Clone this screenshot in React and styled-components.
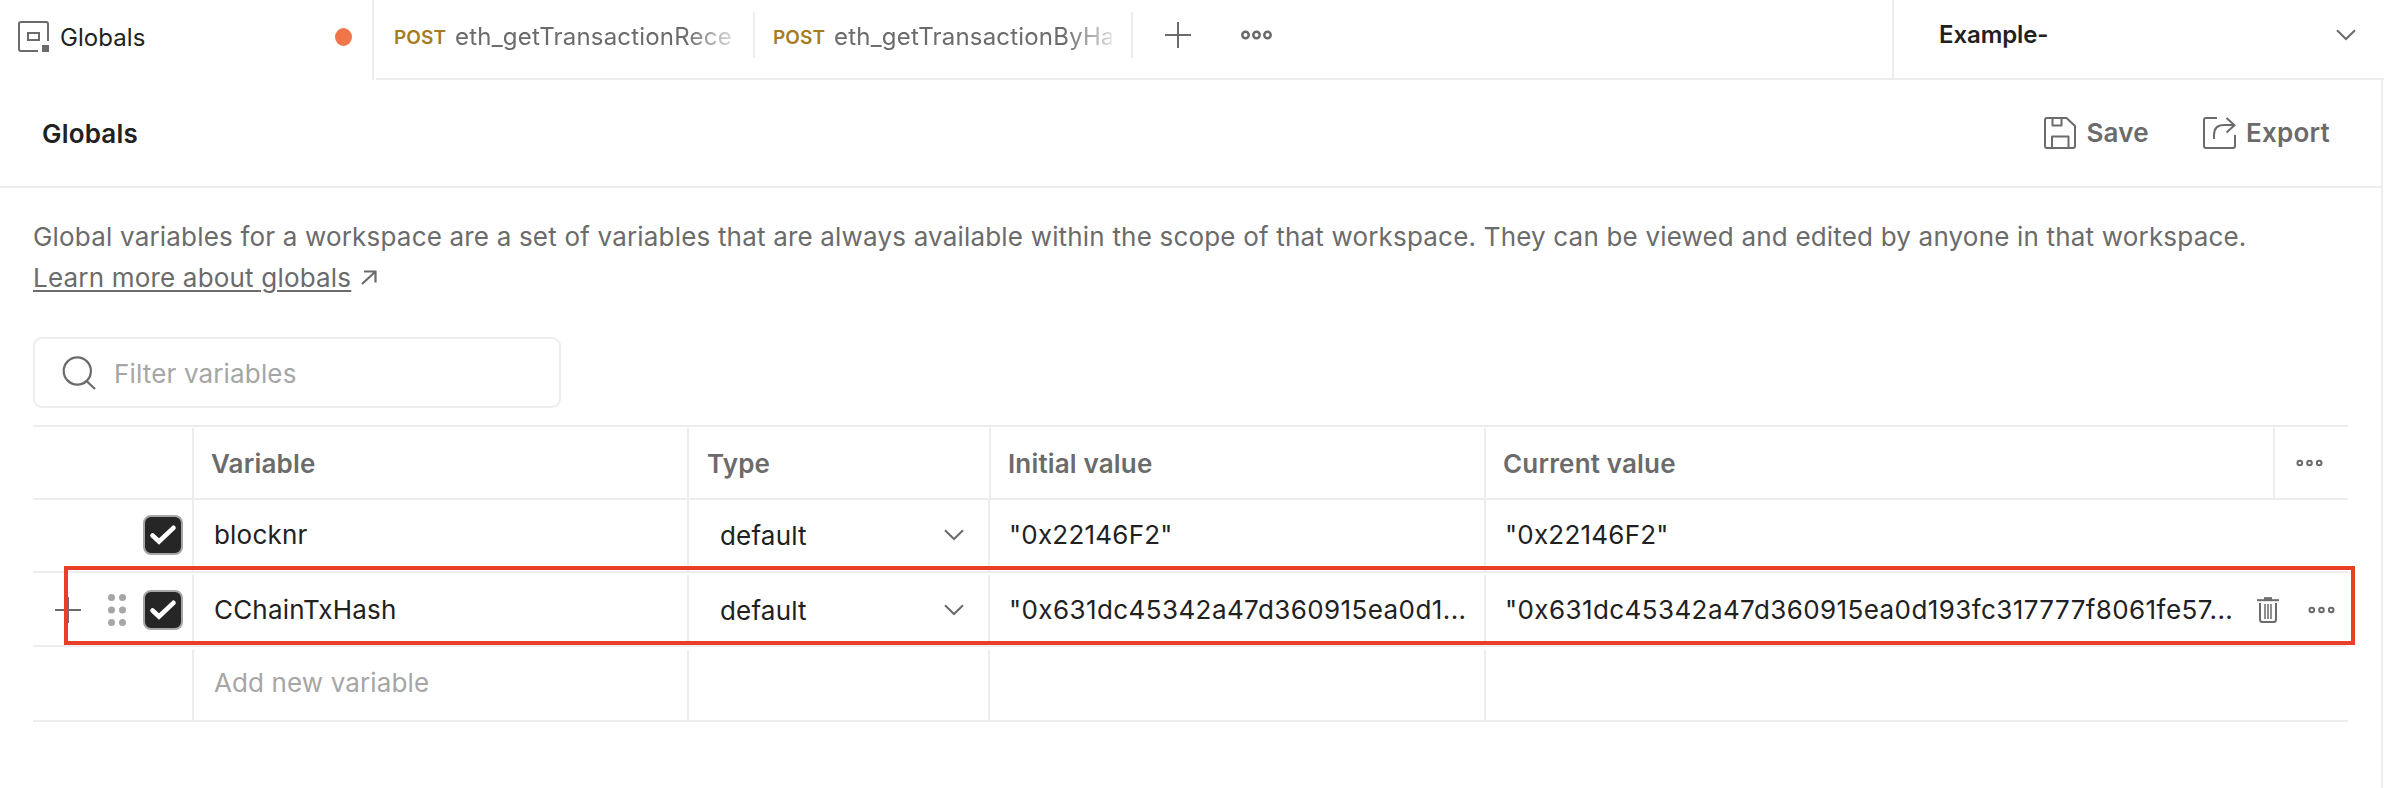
import React from "react";
import styled, { createGlobalStyle, css } from "styled-components";

const LINE = "#ededed";
const GREY = "#6b6b6b";
const MUTED = "#a6a6a6";
const INK = "#212121";

const GlobalStyle = createGlobalStyle`
  * { box-sizing: border-box; }
  body {
    margin: 0;
    background: #fff;
    color: ${INK};
    font-family: Inter, "Liberation Sans", sans-serif;
    font-size: 26px;
    letter-spacing: 0.19px;
    overflow: hidden;
  }
  svg { display: block; flex: none; }
`;

const Page = styled.div`
  width: 2384px;
  height: 788px;
  display: flex;
  flex-direction: column;
`;

/* Tab bar */
const TabBar = styled.div`
  display: flex;
  height: 80px;
  flex: none;
`;
const ActiveTab = styled.div`
  display: flex;
  align-items: center;
  width: 374px;
  padding: 0 20px 6px 18px;
  border-right: 2px solid ${LINE};
  font-size: 24px;
  letter-spacing: 0.06px;
`;
const TabLabel = styled.span`
  flex: 1;
  margin-left: 10px;
`;
const UnsavedDot = styled.span`
  width: 17px;
  height: 18px;
  border-radius: 50%;
  background: #f0764a;
`;
const TabStrip = styled.div`
  display: flex;
  flex: 1;
  margin-left: 2px;
  border-bottom: 2px solid ${LINE};
`;
const RequestTab = styled.div`
  display: flex;
  align-items: center;
  width: ${(p) => p.$width}px;
  height: 46px;
  margin-top: 12px;
  padding: 4px 0 0 18px;
  border-right: 2px solid ${LINE};
`;
const Method = styled.span`
  width: 61px;
  flex: none;
  color: #a67c1f;
  font-size: 19px;
  font-weight: 600;
  letter-spacing: 0.1px;
`;
const RequestName = styled.span`
  width: 292px;
  overflow: hidden;
  white-space: nowrap;
  color: ${GREY};
  font-size: 24px;
  line-height: 34px;
  letter-spacing: 0.2px;
  mask-image: linear-gradient(to right, #000 230px, rgba(0, 0, 0, 0.25) 277px, transparent 278px);
`;
const StripActions = styled.div`
  display: flex;
  align-items: center;
  gap: 49px;
  padding: 0 0 9px 31px;
  color: ${GREY};
`;
const EnvironmentPicker = styled.div`
  display: flex;
  align-items: center;
  justify-content: space-between;
  width: 492px;
  margin-left: auto;
  padding: 0 28px 9px 45px;
  border-left: 2px solid ${LINE};
  font-size: 24px;
  font-weight: 600;
  letter-spacing: -0.1px;
`;

/* Panel */
const Panel = styled.main`
  flex: 1;
  width: 2383px;
  border-right: 2px solid ${LINE};
`;
const Header = styled.header`
  display: flex;
  align-items: center;
  height: 108px;
  padding: 0 51px 0 42px;
  border-bottom: 2px solid ${LINE};
`;
const Title = styled.h1`
  flex: 1;
  margin: 2px 0 0;
  font-size: 26px;
  font-weight: 600;
  line-height: 32px;
`;
const ActionButton = styled.button`
  display: flex;
  align-items: center;
  gap: 10px;
  margin: 0 0 0 54px;
  padding: 0;
  border: 0;
  background: none;
  color: ${GREY};
  font: 600 26px/32px Inter, "Liberation Sans", sans-serif;
  letter-spacing: 0.25px;
`;
const Body = styled.div`
  padding: 29px 33px 0;
`;
const Description = styled.p`
  margin: 0;
  color: ${GREY};
  line-height: 40px;
  letter-spacing: 0.185px;
  white-space: nowrap;
`;
const LearnMore = styled.div`
  display: flex;
  align-items: center;
  gap: 10px;
  height: 40px;
  color: ${GREY};
  span {
    text-decoration: underline;
    text-decoration-thickness: 2px;
    text-underline-offset: 3px;
  }
`;
const FilterBox = styled.div`
  display: flex;
  align-items: center;
  gap: 18px;
  width: 528px;
  height: 71px;
  margin: 40px 0 17px;
  padding-left: 27px;
  border: 2px solid ${LINE};
  border-radius: 9px;
  color: ${MUTED};
  letter-spacing: 0.15px;
  span { padding-top: 1px; }
`;

/* Variables table */
const Table = styled.div`
  width: 2315px;
  border-top: 2px solid ${LINE};
`;
const Row = styled.div`
  display: grid;
  grid-template-columns: ${(p) =>
    p.$head ? "159px 495px 302px 495px 789px 1fr" : "159px 495px 301px 496px 1fr"};
  position: relative;
  height: ${(p) => p.$height}px;
  border-bottom: 2px solid ${LINE};
`;
const Cell = styled.div`
  display: flex;
  align-items: center;
  min-width: 0;
  margin-top: ${(p) => p.$gap || 0}px;
  padding: 0 0 2px ${(p) => p.$indent || 20}px;
  border-left: 2px solid ${LINE};
  white-space: nowrap;
  ${(p) =>
    p.$head &&
    css`
      padding-bottom: 0;
      color: ${GREY};
      font-weight: 600;
      letter-spacing: 0.17px;
    `}
  ${(p) =>
    p.$placeholder &&
    css`
      color: ${MUTED};
      padding-bottom: 6px;
      letter-spacing: 0.12px;
    `}
`;
const Lead = styled.div`
  display: flex;
  align-items: center;
  justify-content: flex-end;
  margin-top: ${(p) => p.$gap || 0}px;
  padding: 0 9px 1px 0;
`;
const Checkbox = styled.span`
  display: flex;
  align-items: center;
  justify-content: center;
  width: 40px;
  height: 40px;
  border: 2px solid ${MUTED};
  border-radius: 8px;
  background: #262626;
`;
const InsertButton = styled.span`
  margin-right: 26px;
  color: ${GREY};
`;
const Grip = styled.span`
  margin-right: 17px;
`;
const TypeText = styled.span`
  flex: 1;
  padding-top: 2px;
`;
const ChevronSlot = styled.span`
  margin: 1px 24px 0 0;
`;
const Value = styled.span`
  margin-left: -1px;
  letter-spacing: ${(p) => (p.$wide ? 0.41 : 0.22)}px;
`;
const RowActions = styled.span`
  display: flex;
  align-items: center;
  gap: 29px;
  margin-left: auto;
  padding: 1px 13px 0 0;
`;
const Highlight = styled.div`
  position: absolute;
  left: 31px;
  top: -7px;
  width: 2291px;
  height: 79px;
  border: 4px solid #e93f26;
`;

const Plus = () => (
  <svg width="28" height="28" viewBox="0 0 28 28" fill="none" stroke="currentColor" strokeWidth="2">
    <path d="M1 14H27M14 1V27" />
  </svg>
);
const Dots = ({ step = 9.7, r = 2.3, size = 27, sw = 2 }) => (
  <svg width={size} height="12" viewBox={`0 0 ${size} 12`} fill="none" stroke={GREY} strokeWidth={sw}>
    <circle cx={size / 2 - step} cy="6" r={r} />
    <circle cx={size / 2} cy="6" r={r} />
    <circle cx={size / 2 + step} cy="6" r={r} />
  </svg>
);
const Chevron = () => (
  <svg width="20" height="12" viewBox="0 0 20 12" fill="none" stroke={GREY} strokeWidth="2">
    <path d="M1 1.2L10 10L19 1.2" />
  </svg>
);
const GlobalsIcon = () => (
  <svg width="32" height="32" viewBox="0 0 32 32" fill="none" stroke={GREY} strokeWidth="2">
    <path d="M20 30H3Q1 30 1 28V3Q1 1 3 1H28Q30 1 30 3V20" />
    <rect x="10" y="12" width="11" height="7" />
    <rect x="24" y="24" width="7" height="7" fill={GREY} stroke="none" />
  </svg>
);
const SaveIcon = () => (
  <svg width="32" height="32" viewBox="0 0 32 32" fill="none" stroke="currentColor" strokeWidth="2" strokeLinejoin="round">
    <path d="M3 1H22.5L31 9V29Q31 31 29 31H3Q1 31 1 29V3Q1 1 3 1Z" />
    <path d="M8.5 1V8.5H17.5V1M8 31V19.5H24.5V31" />
  </svg>
);
const ExportIcon = () => (
  <svg width="33" height="32" viewBox="0 0 33 32" fill="none" stroke="currentColor" strokeWidth="2">
    <path d="M14 1H3Q1 1 1 3V29Q1 31 3 31H30Q32 31 32 29V18" />
    <path d="M11 22V18Q11 8 21 8H31M23.5 1L31.5 8.3L23.5 15.5" />
  </svg>
);
const ExternalArrow = () => (
  <svg width="16" height="15" viewBox="0 0 16 15" fill="none" stroke="currentColor" strokeWidth="2.2">
    <path d="M1 14L14 2M3 1.5H14.5V12.5" />
  </svg>
);
const SearchIcon = () => (
  <svg width="34" height="34" viewBox="0 0 34 34" fill="none" stroke={GREY} strokeWidth="2.2">
    <circle cx="15.3" cy="15" r="13.6" />
    <path d="M24.5 25L33 33" />
  </svg>
);
const Check = () => (
  <svg width="28" height="22" viewBox="0 0 28 22" fill="none" stroke="#fff" strokeWidth="4.6" strokeLinecap="round">
    <path d="M3.5 11.5L10 17.5L24.5 3.8" />
  </svg>
);
const GripIcon = () => (
  <svg width="18" height="32" viewBox="0 0 18 32" fill={MUTED}>
    {[3.5, 16, 28.5].map((y) => (
      <React.Fragment key={y}>
        <circle cx="3.5" cy={y} r="3.5" />
        <circle cx="14.5" cy={y} r="3.5" />
      </React.Fragment>
    ))}
  </svg>
);
const Trash = () => (
  <svg width="22" height="26" viewBox="0 0 22 26" fill="none" stroke={GREY}>
    <path d="M0 3.2H22" strokeWidth="2" />
    <path d="M7 1.5H15" strokeWidth="2.6" />
    <path d="M3 6V22.5Q3 25 5.5 25H16.5Q19 25 19 22.5V6" strokeWidth="2" />
    <path d="M8 7V22M11 7V22M14 7V22" strokeWidth="1.5" />
  </svg>
);

function TypeCell({ gap }) {
  return (
    <Cell $gap={gap} $indent={31}>
      <TypeText>default</TypeText>
      <ChevronSlot>
        <Chevron />
      </ChevronSlot>
    </Cell>
  );
}

export default function App() {
  return (
    <Page>
      <GlobalStyle />
      <TabBar>
        <ActiveTab>
          <GlobalsIcon />
          <TabLabel>Globals</TabLabel>
          <UnsavedDot />
        </ActiveTab>
        <TabStrip>
          <RequestTab $width={379}>
            <Method>POST</Method>
            <RequestName>eth_getTransactionRece</RequestName>
          </RequestTab>
          <RequestTab $width={378}>
            <Method>POST</Method>
            <RequestName>eth_getTransactionByHa</RequestName>
          </RequestTab>
          <StripActions>
            <Plus />
            <Dots step={11} r={3.2} size={31} sw={2.5} />
          </StripActions>
          <EnvironmentPicker>
            <span>Example-</span>
            <Chevron />
          </EnvironmentPicker>
        </TabStrip>
      </TabBar>
      <Panel>
        <Header>
          <Title>Globals</Title>
          <ActionButton>
            <SaveIcon />
            Save
          </ActionButton>
          <ActionButton>
            <ExportIcon />
            Export
          </ActionButton>
        </Header>
        <Body>
          <Description>
            Global variables for a workspace are a set of variables that are always available within the scope of that
            workspace. They can be viewed and edited by anyone in that workspace.
          </Description>
          <LearnMore>
            <span>Learn more about globals</span>
            <ExternalArrow />
          </LearnMore>
          <FilterBox>
            <SearchIcon />
            <span>Filter variables</span>
          </FilterBox>
          <Table>
            <Row $head $height={73}>
              <Lead />
              <Cell $head $gap={1} $indent={17}>Variable</Cell>
              <Cell $head $gap={1} $indent={18}>Type</Cell>
              <Cell $head $gap={1} $indent={17}>Initial value</Cell>
              <Cell $head $gap={1} $indent={17}>Current value</Cell>
              <Cell $head $gap={1} $indent={21}>
                <Dots />
              </Cell>
            </Row>
            <Row $height={73}>
              <Lead>
                <Checkbox>
                  <Check />
                </Checkbox>
              </Lead>
              <Cell>blocknr</Cell>
              <TypeCell />
              <Cell>
                <Value>"0x22146F2"</Value>
              </Cell>
              <Cell>
                <Value>"0x22146F2"</Value>
              </Cell>
            </Row>
            <Row $height={74}>
              <Lead $gap={2}>
                <InsertButton>
                  <Plus />
                </InsertButton>
                <Grip>
                  <GripIcon />
                </Grip>
                <Checkbox>
                  <Check />
                </Checkbox>
              </Lead>
              <Cell $gap={2}>CChainTxHash</Cell>
              <TypeCell gap={2} />
              <Cell $gap={2}>
                <Value $wide>"0x631dc45342a47d360915ea0d1...</Value>
              </Cell>
              <Cell $gap={2}>
                <Value $wide>"0x631dc45342a47d360915ea0d193fc317777f8061fe57...</Value>
                <RowActions>
                  <Trash />
                  <Dots />
                </RowActions>
              </Cell>
              <Highlight />
            </Row>
            <Row $height={75}>
              <Lead />
              <Cell $gap={3} $placeholder>
                Add new variable
              </Cell>
              <Cell $gap={3} />
              <Cell $gap={3} />
              <Cell $gap={3} />
            </Row>
          </Table>
        </Body>
      </Panel>
    </Page>
  );
}
